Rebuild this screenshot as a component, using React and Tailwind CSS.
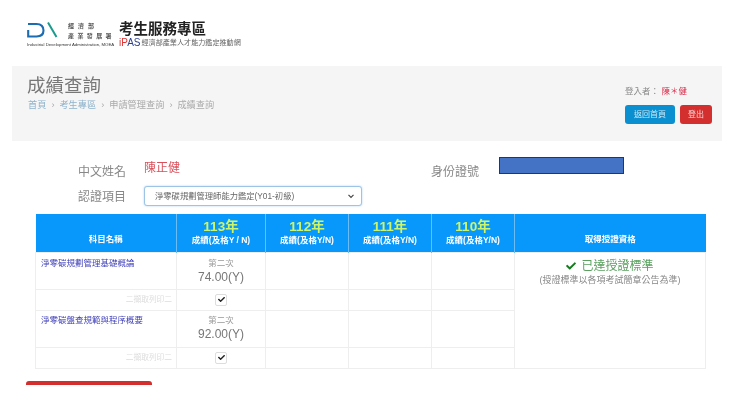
import { FaCheck } from "react-icons/fa";

const font = "font-['Liberation_Sans','Noto_Sans_CJK_TC',sans-serif]";
const years = [
  { year: "113年", sub: "成績(及格Y / N)" },
  { year: "112年", sub: "成績(及格Y/N)" },
  { year: "111年", sub: "成績(及格Y/N)" },
  { year: "110年", sub: "成績(及格Y/N)" },
];
const subjects = [
  { name: "淨零碳規劃管理基礎概論", score: "74.00(Y)", pad: "pt-[4px]" },
  { name: "淨零碳盤查規範與程序概要", score: "92.00(Y)", pad: "pt-[3px]" },
];

function Logo() {
  return (
    <div className="w-[88px] shrink-0">
      <div className="flex h-[20px] items-start">
        <svg width="32" height="17" viewBox="0 0 32 17" className="shrink-0">
          <path d="M1 3H9.5C14 3 16.5 5.5 16.5 9.5C16.5 13 14 15.5 9.5 15.5H1.2V9" fill="none" stroke="#1b6cb0" strokeWidth="2.1" />
          <path d="M21 1.5L29.5 16" stroke="#1c9a8c" strokeWidth="2" />
        </svg>
        <div className="ml-[9px] mt-[2px] flex flex-col gap-[3px] text-[6px] font-bold leading-[7px] text-[#555]">
          <span className="tracking-[4px]">經濟部</span>
          <span className="whitespace-nowrap tracking-[3.4px]">產業發展署</span>
        </div>
      </div>
      <div className="mt-[1px] whitespace-nowrap text-[4.3px] leading-[5px] text-[#333]">
        Industrial Development Administration, MOEA
      </div>
    </div>
  );
}

function Checkbox() {
  return (
    <span className="mx-auto flex h-[12px] w-[12px] items-center justify-center rounded-[2px] border border-[#ddd] bg-white">
      <FaCheck className="text-[7px] text-[#222]" />
    </span>
  );
}

export default function App() {
  return (
    <div className={`h-[409px] w-[740px] overflow-hidden bg-white blur-[0.5px] ${font}`}>
      <header className="flex items-start pl-[27px] pt-[21px]">
        <Logo />
        <div className="ml-[4px]">
          <div className="text-[14.5px] font-bold leading-[16px] text-[#222]">考生服務專區</div>
          <div className="mt-[1px] flex items-center leading-[10px]">
            <span className="text-[10px] text-[#d33]">iP<span className="text-[#2b3f8f]">AS</span></span>
            <span className="ml-[1px] text-[7.1px] text-[#666]">經濟部產業人才能力鑑定推動網</span>
          </div>
        </div>
      </header>

      <section className="ml-[12px] mt-[18px] flex h-[75px] w-[710px] justify-between bg-[#f5f5f5] pl-[15px] pr-[10px]">
        <div className="pt-[9px]">
          <h1 className="text-[18.5px] font-normal leading-[22px] text-[#777]">成績查詢</h1>
          <div className="ml-[1px] mt-[2px] flex items-center gap-[5px] text-[9.2px] leading-[12px] text-[#aaa]">
            <span className="text-[#8fb3cc]">首頁</span>
            <span>›</span>
            <span className="text-[#8fb3cc]">考生專區</span>
            <span>›</span>
            <span>申請管理查詢</span>
            <span>›</span>
            <span>成績查詢</span>
          </div>
        </div>
        <div className="w-[87px] pt-[20px]">
          <div className="text-[8.5px] leading-[10px] text-[#888]">
            登入者： <span className="text-[#d9304f]">陳＊健</span>
          </div>
          <div className="mt-[9px] flex gap-[5px]">
            <button className="h-[19px] w-[50px] rounded-[3px] bg-[#0a8fd0] text-[8px] text-[#cfeaf7]">返回首頁</button>
            <button className="h-[19px] w-[32px] rounded-[3px] bg-[#d32f2f] text-[8px] text-[#f8d9d9]">登出</button>
          </div>
        </div>
      </section>

      <section className="ml-[78px] mt-[16px] w-[546px]">
        <div className="flex h-[28px] items-start">
          <span className="mt-[7px] w-[66px] text-[12px] leading-[16px] text-[#888]">中文姓名</span>
          <span className="mt-[3px] w-[287px] text-[12px] leading-[16px] text-[#d9505a]">陳正健</span>
          <span className="mt-[7px] w-[68px] text-[12px] leading-[16px] text-[#888]">身份證號</span>
          <span className="h-[17px] w-[125px] border border-[#1f3864] bg-[#4472c4]" />
        </div>
        <div className="mt-[1px] flex h-[20px] items-center">
          <span className="mt-[2px] w-[66px] text-[12px] leading-[16px] text-[#888]">認證項目</span>
          <div className="flex h-[20px] w-[218px] items-center justify-between rounded-[3px] border border-[#9cc4e4] bg-white pl-[10px] pr-[6px] shadow-[0_0_2px_rgba(102,175,233,0.6)]">
            <span className="text-[8.3px] text-[#666]">淨零碳規劃管理師能力鑑定(Y01-初級)</span>
            <svg width="8" height="8" viewBox="0 0 8 8">
              <path d="M1.5 2.8L4 5.3L6.5 2.8" fill="none" stroke="#444" strokeWidth="1.2" />
            </svg>
          </div>
        </div>
      </section>

      <table className="ml-[35px] mt-[8px] w-[670px] table-fixed border-collapse">
        <colgroup>
          <col className="w-[141px]" />
          <col className="w-[89px]" />
          <col className="w-[83px]" />
          <col className="w-[83px]" />
          <col className="w-[83px]" />
          <col className="w-[191px]" />
        </colgroup>
        <thead>
          <tr className="h-[38px] bg-[#0897fb] text-white">
            <th className="border-r border-[#6cbdf5] pb-[3px] pt-[18px] align-top text-[8.5px] font-bold leading-[14px]">科目名稱</th>
            {years.map((y) => (
              <th key={y.year} className="border-r border-[#6cbdf5] pb-[3px] pt-[5px] align-top font-bold">
                <div className="text-[13.5px] leading-[16px] text-[#cdf56a]">{y.year}</div>
                <div className="text-[8.5px] leading-[11px]">{y.sub}</div>
              </th>
            ))}
            <th className="pb-[3px] pt-[18px] align-top text-[8.5px] font-bold leading-[14px]">取得授證資格</th>
          </tr>
        </thead>
        <tbody>
          {subjects.map((s, i) => [
            <tr key={s.name} className="h-[37px]">
              <td className={`border border-[#eee] pl-[5px] align-top text-[8.5px] leading-[12px] text-[#3f3fb8] ${s.pad}`}>{s.name}</td>
              <td className={`border border-[#eee] text-center align-top text-[#777] ${s.pad}`}>
                <div className="text-[8.5px] leading-[12px] text-[#999]">第二次</div>
                <div className="text-[12px] leading-[16px]">{s.score}</div>
              </td>
              <td className="border border-[#eee]" />
              <td className="border border-[#eee]" />
              <td className="border border-[#eee]" />
              {i === 0 && (
                <td rowSpan={4} className="border border-[#eee] pt-[5px] text-center align-top">
                  <div className="flex items-center justify-center gap-[5px] text-[12px] leading-[16px] text-[#5aa05f]">
                    <FaCheck className="text-[10px] text-[#157a1c]" />
                    已達授證標準
                  </div>
                  <div className="text-[9px] leading-[12px] text-[#888]">(授證標準以各項考試簡章公告為準)</div>
                </td>
              )}
            </tr>,
            <tr key={s.name + "-print"} className="h-[21px]">
              <td className="border border-[#eee] pr-[4px] text-right text-[7.7px] text-[#ddd]">二擷取列印二</td>
              <td className="border border-[#eee]"><Checkbox /></td>
              <td className="border border-[#eee]" />
              <td className="border border-[#eee]" />
              <td className="border border-[#eee]" />
            </tr>,
          ])}
        </tbody>
      </table>

      <div className="ml-[26px] mt-[12px] h-[4px] w-[126px] rounded-t-[3px] bg-[#d32f2f]" />
    </div>
  );
}
